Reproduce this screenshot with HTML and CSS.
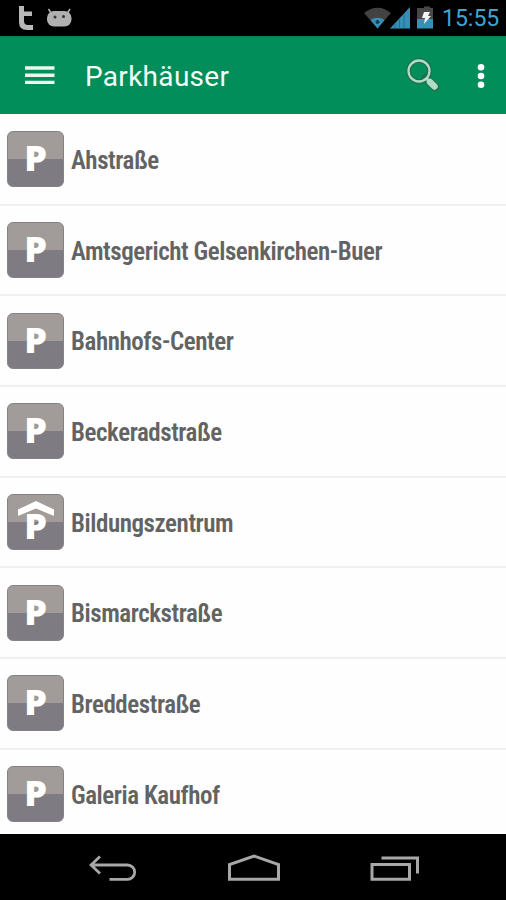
FILE: index.html
```html
<!DOCTYPE html>
<html lang="de">
<head>
    <meta charset="UTF-8">
    <meta name="viewport" content="width=device-width, initial-scale=1.0">
    <title>Parkhäuser</title>
    <link rel="stylesheet" href="styles.css">
</head>
<body>
    <div class="screen">
        <!-- Status bar -->
        <div class="status-bar">
            <svg class="status-left" width="80" height="36" viewBox="0 0 80 36">
                <path d="M19 6h5v5.500h8v4.500h-8v5q0 4 4 4h5v5h-6q-8 0-8-8z" fill="#b8b8b8"/>
                <path d="M48.500 9l2.500 4M70 9l-2.500 4" stroke="#b0b0b0" stroke-width="1.500"/>
                <rect x="47" y="11" width="24.500" height="15.500" rx="7" fill="#b0b0b0"/>
                <circle cx="55" cy="17" r="1.500" fill="#333"/>
                <circle cx="63.500" cy="16.500" r="1.500" fill="#333"/>
            </svg>
            <svg width="78" height="36" viewBox="0 0 78 36">
                <path d="M0 13q13.500-10.500 27 0L13.500 28.500z" fill="#424242"/>
                <path d="M6.500 20q7-4.500 14 0l-7 8.500z" fill="#3590b8"/>
                <circle cx="13.500" cy="22" r="2" fill="#173f50"/>
                <path d="M26 28.500L46 7v21.500z" fill="#3590b8"/>
                <path d="M31 23v5.500M35.500 18.500v10M40 14v14.500" stroke="#286d8c"/>
                <path d="M57 8h3V6.500h6V8h3v12H53V8z" fill="#484848"/>
                <path d="M53 19h16v9.500H53z" fill="#3590b8"/>
                <path d="M60 12h6l-2 4h3l-7 8 1-6h-3z" fill="#f4f4f4"/>
            </svg>
            <span class="clock">15:55</span>
        </div>

        <!-- Action bar -->
        <div class="action-bar">
            <svg class="menu" width="30" height="20" viewBox="0 0 30 20">
                <path d="M0 2h29.500M0 9.200h29.500M0 16.400h29.500" stroke="#e9f8ec" stroke-width="3.400"/>
            </svg>
            <h1>Parkhäuser</h1>
            <svg class="search" width="34" height="34" viewBox="0 0 34 34">
                <circle cx="13" cy="13" r="10.500" fill="none" stroke="#27694c" stroke-width="4.600"/>
                <path d="M20 20l9 9" stroke="#27694c" stroke-width="8.500" stroke-linecap="round"/>
                <circle cx="13" cy="13" r="10.500" fill="none" stroke="#acdfc6" stroke-width="2.300"/>
                <path d="M20 20l4 4" stroke="#acdfc6" stroke-width="3"/>
                <path d="M24 24l4.500 4.500" stroke="#acdfc6" stroke-width="6.500" stroke-linecap="round"/>
            </svg>
            <svg class="more" width="8" height="24" viewBox="0 0 8 24">
                <g fill="#fff">
                    <circle cx="4" cy="3.300" r="3.300"/>
                    <circle cx="4" cy="12" r="3.300"/>
                    <circle cx="4" cy="20.700" r="3.300"/>
                </g>
            </svg>
        </div>

        <!-- Car park list -->
        <ul class="list">
            <li><span class="icon"><b>P</b></span><span class="name">Ahstraße</span></li>
            <li><span class="icon"><b>P</b></span><span class="name">Amtsgericht Gelsenkirchen-Buer</span></li>
            <li><span class="icon"><b>P</b></span><span class="name">Bahnhofs-Center</span></li>
            <li><span class="icon"><b>P</b></span><span class="name">Beckeradstraße</span></li>
            <li>
                <span class="icon garage">
                    <svg width="36" height="15" viewBox="0 0 36 15"><path d="M0 8.500L18 0l18 8.500V15L18 7.500 0 15z" fill="#fff"/></svg>
                    <b>P</b>
                </span>
                <span class="name">Bildungszentrum</span>
            </li>
            <li><span class="icon"><b>P</b></span><span class="name">Bismarckstraße</span></li>
            <li><span class="icon"><b>P</b></span><span class="name">Breddestraße</span></li>
            <li><span class="icon"><b>P</b></span><span class="name">Galeria Kaufhof</span></li>
        </ul>

        <!-- Navigation bar -->
        <div class="nav-bar">
            <svg width="48" height="30" viewBox="0 0 48 30">
                <path d="M11 2.500L2 11l9 8.500M2 11h36.500a7 7 0 0 1 0 14.300H20.500" fill="none" stroke="#a8a8a8" stroke-width="2.800"/>
            </svg>
            <svg width="54" height="30" viewBox="0 0 54 30">
                <path d="M2.500 25.300V10.500L27 2l24.500 8.500v14.800z" fill="none" stroke="#a8a8a8" stroke-width="3"/>
            </svg>
            <svg width="50" height="30" viewBox="0 0 50 30">
                <path d="M2 10.500h37.500v14.800H2zM11.500 4h36v15.500" fill="none" stroke="#a8a8a8" stroke-width="3"/>
            </svg>
        </div>
    </div>
</body>
</html>
```
FILE: styles.css
```css
body {
    margin: 0;
    background: #000;
    font-family: Roboto, sans-serif;
}
.screen {
    display: flex;
    flex-direction: column;
    height: 900px;
    overflow: hidden;
}
.status-bar {
    display: flex;
    flex: none;
    height: 36px;
    background: #000;
    padding-right: 8px;
}
.status-left {
    margin-right: auto;
}
.clock {
    width: 56px;
    font-size: 23px;
    line-height: 38px;
    text-align: right;
    white-space: nowrap;
    color: #3ba6d4;
}
.action-bar {
    display: flex;
    flex: none;
    align-items: center;
    box-sizing: border-box;
    height: 78px;
    padding: 0 21px 0 25px;
    background: #028e5b;
    border-top: 1px solid #0b7d51;
}
.action-bar h1 {
    margin: 2px auto 0 30px;
    font-size: 28px;
    font-weight: 400;
    line-height: 36px;
    letter-spacing: 0.3px;
    color: #f1fff6;
}
.search {
    margin: 0 37px 1px 0;
}
.list {
    flex: none;
    box-sizing: border-box;
    height: 720px;
    margin: 0;
    padding: 1px 0 0;
    overflow: hidden;
    list-style: none;
    background: #fefefe;
}
.list li {
    display: flex;
    align-items: center;
    box-sizing: border-box;
    height: 90.7px;
    padding-left: 7px;
    border-bottom: 2px solid #f0f0f0;
}
.icon {
    display: flex;
    flex: none;
    justify-content: center;
    box-sizing: border-box;
    width: 57px;
    height: 56px;
    border: 1px solid #868284;
    border-radius: 6px;
    background: linear-gradient(#a19b99 50%, #7f7b82 50%);
}
.icon svg {
    flex: none;
}
.icon b {
    font-family: "Open Sans", sans-serif;
    font-size: 36px;
    font-weight: 800;
    line-height: 52px;
    color: #fff;
}
.garage {
    flex-direction: column;
    align-items: center;
    justify-content: flex-start;
    padding-top: 6px;
}
.garage b {
    margin-top: -8px;
    line-height: 35px;
}
.name {
    margin-left: 7px;
    padding-top: 2px;
    font-size: 25px;
    font-weight: 600;
    font-stretch: 75%;
    letter-spacing: -0.44px;
    white-space: nowrap;
    color: #636363;
}
.nav-bar {
    display: flex;
    flex: none;
    align-items: center;
    justify-content: space-between;
    height: 66px;
    padding: 2px 86px 0 89px;
    background: #000;
}
```
